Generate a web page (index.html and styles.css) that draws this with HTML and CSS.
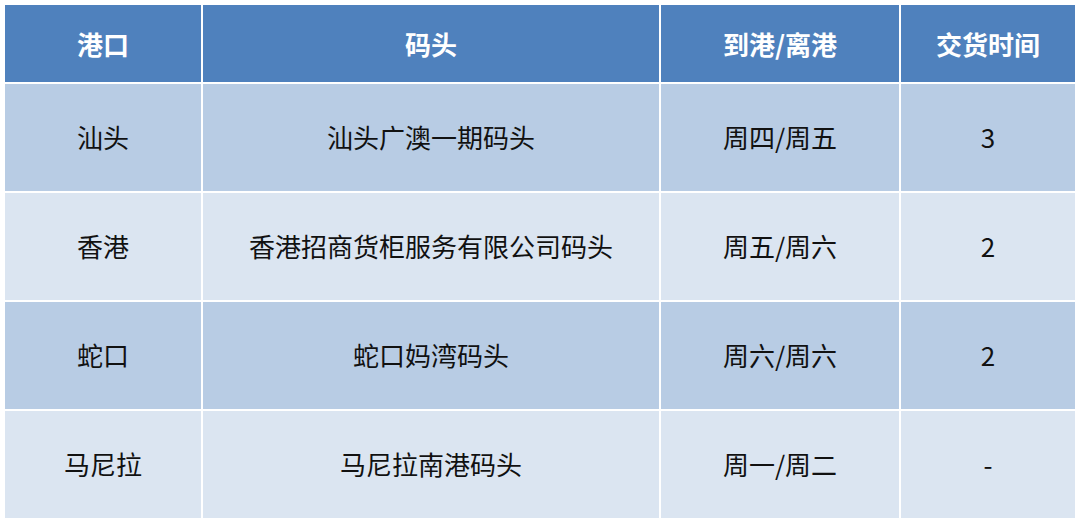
FILE: index.html
```html
<!DOCTYPE html>
<html lang="zh">
<head>
<meta charset="utf-8">
<link rel="stylesheet" href="styles.css">
</head>
<body>
<table class="ports">
  <colgroup>
    <col class="c1"><col class="c2"><col class="c3"><col class="c4">
  </colgroup>
  <thead>
    <tr><th>港口</th><th>码头</th><th>到港/离港</th><th>交货时间</th></tr>
  </thead>
  <tbody>
    <tr class="odd"><td>汕头</td><td>汕头广澳一期码头</td><td>周四/周五</td><td>3</td></tr>
    <tr class="even"><td>香港</td><td>香港招商货柜服务有限公司码头</td><td>周五/周六</td><td>2</td></tr>
    <tr class="odd"><td>蛇口</td><td>蛇口妈湾码头</td><td>周六/周六</td><td>2</td></tr>
    <tr class="even"><td>马尼拉</td><td>马尼拉南港码头</td><td>周一/周二</td><td>-</td></tr>
  </tbody>
</table>
</body>
</html>
```
FILE: styles.css
```css
html, body {
  margin: 0;
  background: #ffffff;
}
body {
  padding: 3px;
  font-family: "Noto Sans CJK SC", "Noto Sans", sans-serif;
}
.ports {
  border-collapse: separate;
  border-spacing: 2px;
  table-layout: fixed;
  width: 1074px;
}
.c1 { width: 196px; }
.c2 { width: 456px; }
.c3 { width: 238px; }
.c4 { width: 174px; }
.ports th, .ports td {
  padding: 0;
  text-align: center;
  vertical-align: middle;
  font-size: 26px;
  line-height: 30px;
}
.ports th {
  height: 77px;
  background: #4f81bd;
  color: #ffffff;
  font-weight: 700;
}
.ports td {
  height: 105px;
  color: #111111;
  font-weight: 400;
  padding-bottom: 2px;
}
.odd td { background: #b8cce4; }
.even td { background: #dbe5f1; }
```
